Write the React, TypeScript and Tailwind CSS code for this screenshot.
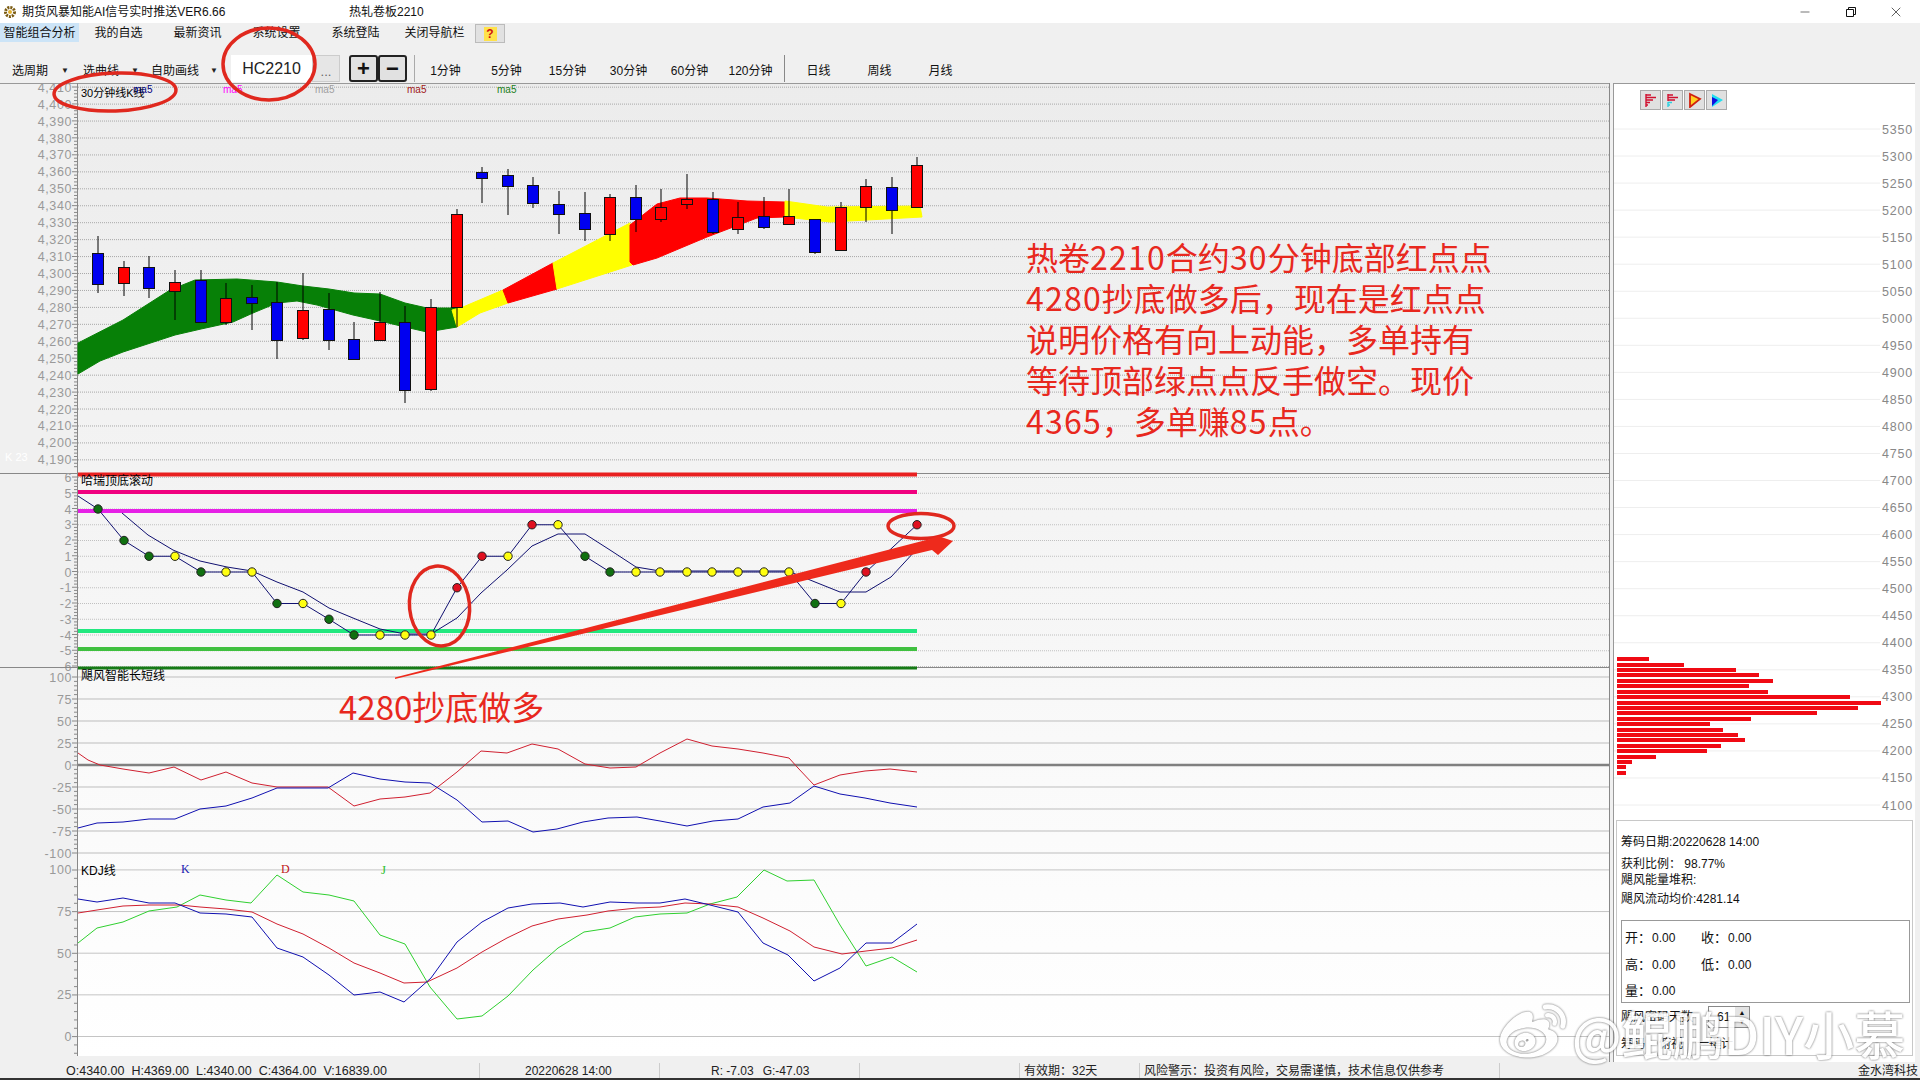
import { FaWeibo } from "react-icons/fa";
import { Minus, X } from "lucide-react";

type Pt = [number, number];

// x, wick top, wick bottom, body top, body bottom, up?
const candles: [number, number, number, number, number, boolean][] = [
  [98, 236, 293, 253, 284, false],
  [124, 261, 296, 267, 283, true],
  [149, 256, 298, 267, 288, false],
  [175, 270, 320, 282, 291, true],
  [201, 270, 323, 280, 322, false],
  [226, 283, 325, 298, 322, true],
  [252, 285, 330, 297, 303, false],
  [277, 282, 359, 302, 340, false],
  [303, 273, 340, 310, 338, true],
  [329, 293, 350, 309, 340, false],
  [354, 322, 359, 339, 359, false],
  [380, 292, 340, 322, 340, true],
  [405, 306, 403, 322, 390, false],
  [431, 299, 391, 307, 389, true],
  [457, 209, 327, 214, 307, true],
  [482, 167, 203, 172, 178, false],
  [508, 169, 215, 175, 186, false],
  [533, 177, 208, 185, 203, false],
  [559, 191, 234, 204, 214, false],
  [585, 192, 241, 213, 229, false],
  [610, 194, 241, 197, 234, true],
  [636, 185, 232, 197, 219, false],
  [661, 189, 222, 207, 219, true],
  [687, 174, 209, 199, 204, true],
  [713, 192, 234, 199, 232, false],
  [738, 202, 234, 217, 229, true],
  [764, 197, 229, 216, 227, false],
  [789, 189, 217, 216, 224, true],
  [815, 219, 254, 219, 252, false],
  [841, 202, 251, 207, 250, true],
  [866, 179, 222, 186, 207, true],
  [892, 177, 234, 187, 210, false],
  [917, 157, 207, 165, 207, true],
];

const ribbons: { color: string; pts: Pt[] }[] = [
  {
    color: "#078007",
    pts: [
      [78, 343], [123, 320], [170, 290], [195, 280], [237, 279], [277, 282], [303, 286], [329, 289],
      [354, 293], [380, 294], [405, 303], [427, 308], [457, 308], [457, 327], [427, 332], [405, 327],
      [380, 321], [353, 315], [317, 305], [297, 301], [277, 303], [253, 313], [233, 322], [201, 329],
      [175, 335], [123, 352], [100, 361], [78, 374],
    ],
  },
  { color: "#ffff00", pts: [[452, 310], [463, 307], [503, 290], [508, 303], [480, 313], [457, 327]] },
  { color: "#ff0000", pts: [[503, 290], [553, 263], [557, 289], [508, 303]] },
  { color: "#ffff00", pts: [[553, 263], [630, 223], [632, 265], [557, 289]] },
  {
    color: "#ff0000",
    pts: [
      [630, 225], [657, 204], [680, 198], [707, 198], [747, 201], [785, 202], [785, 217], [757, 218],
      [707, 237], [657, 258], [633, 265], [630, 262],
    ],
  },
  { color: "#ffff00", pts: [[785, 201], [827, 207], [920, 206], [922, 217], [830, 222], [785, 217]] },
];

const dotColor = { g: "#107010", y: "#ffff10", r: "#e01020" };
const dots: [number, number, keyof typeof dotColor][] = [
  [98, 4, "g"], [124, 2, "g"], [149, 1, "g"], [175, 1, "y"], [201, 0, "g"], [226, 0, "y"], [252, 0, "y"],
  [277, -2, "g"], [303, -2, "y"], [329, -3, "g"], [354, -4, "g"], [380, -4, "y"], [405, -4, "y"], [431, -4, "y"],
  [457, -1, "r"], [482, 1, "r"], [508, 1, "y"], [532, 3, "r"], [558, 3, "y"], [585, 1, "g"], [610, 0, "g"],
  [636, 0, "y"], [660, 0, "y"], [687, 0, "y"], [712, 0, "y"], [738, 0, "y"], [764, 0, "y"], [789, 0, "y"],
  [815, -2, "g"], [841, -2, "y"], [866, 0, "r"], [917, 3, "r"],
];

const hrySlow: Pt[] = [
  [122, 513], [148, 535], [173, 550], [200, 561], [227, 567], [252, 571], [277, 582], [303, 592], [329, 608],
  [353, 618], [380, 629], [405, 634], [431, 634], [457, 618], [481, 593], [507, 570], [532, 546], [558, 534],
  [585, 534], [610, 550], [636, 567], [660, 571], [788, 571], [815, 582], [840, 592], [866, 592], [891, 577],
  [916, 550],
];

const longShortRed: Pt[] = [
  [78, 753], [88, 760], [100, 765], [123, 769], [149, 773], [174, 767], [201, 780], [226, 772], [252, 783],
  [277, 787], [328, 787], [354, 806], [380, 799], [405, 797], [430, 793], [457, 772], [481, 751], [507, 753],
  [532, 744], [558, 749], [585, 764], [610, 768], [636, 767], [660, 753], [687, 739], [712, 746], [738, 749],
  [763, 753], [789, 758], [798, 768], [814, 785], [840, 775], [865, 771], [890, 769], [917, 772],
];
const longShortBlue: Pt[] = [
  [78, 828], [97, 823], [123, 822], [149, 819], [175, 819], [200, 809], [226, 806], [252, 798], [277, 788],
  [328, 788], [353, 773], [380, 779], [405, 782], [430, 783], [457, 800], [482, 822], [508, 821], [533, 832],
  [557, 829], [583, 822], [608, 818], [637, 817], [660, 821], [687, 826], [713, 821], [738, 819], [763, 807],
  [790, 803], [814, 786], [840, 794], [865, 798], [890, 803], [917, 807],
];

const kLine: Pt[] = [
  [78, 899], [97, 902], [123, 898], [149, 903], [175, 903], [200, 913], [226, 914], [252, 917], [277, 948],
  [303, 957], [329, 975], [354, 995], [380, 992], [404, 1002], [431, 978], [457, 942], [482, 922], [508, 908],
  [532, 904], [560, 903], [583, 907], [610, 902], [637, 903], [660, 903], [685, 899], [710, 905], [738, 912],
  [763, 943], [788, 955], [814, 981], [840, 968], [866, 943], [892, 943], [917, 924],
];
const dLine: Pt[] = [
  [78, 913], [97, 910], [123, 906], [149, 905], [180, 905], [200, 907], [226, 909], [252, 912], [277, 924],
  [303, 934], [329, 948], [354, 963], [380, 973], [404, 983], [427, 982], [457, 968], [482, 952], [507, 938],
  [532, 926], [558, 919], [587, 915], [608, 911], [637, 908], [660, 907], [685, 903], [710, 904], [738, 907],
  [763, 918], [790, 931], [814, 947], [842, 954], [866, 951], [892, 948], [917, 940],
];
const jLine: Pt[] = [
  [78, 943], [97, 928], [123, 922], [149, 911], [177, 907], [200, 895], [226, 900], [251, 903], [277, 875],
  [303, 892], [329, 895], [354, 901], [380, 935], [405, 944], [430, 987], [457, 1019], [482, 1016], [508, 996],
  [533, 970], [558, 948], [584, 932], [610, 928], [635, 917], [660, 914], [687, 913], [710, 904], [737, 897],
  [764, 870], [787, 881], [814, 880], [840, 925], [866, 966], [892, 957], [917, 972],
];

const profile: [number, number][] = [
  [657, 32], [663, 67], [668, 119], [673, 142], [679, 156], [684, 132], [690, 151], [695, 233], [701, 264],
  [706, 241], [711, 200], [717, 134], [722, 93], [728, 106], [733, 121], [738, 128], [744, 104], [749, 90],
  [755, 39], [760, 15], [765, 9], [771, 9],
];

const toPoints = (pts: Pt[]) => pts.map((p) => p.join(",")).join(" ");

const priceLabels = Array.from({ length: 23 }, (_, i) => 4410 - i * 10);
const priceY = (v: number) => 138 + (4380 - v) * 1.694;
const hryY = (v: number) => 572 - 15.75 * v;
const longShortY = (v: number) => 765 - 0.88 * v;
const kdjY = (v: number) => 1036.5 - 1.666 * v;

function AxisLabel({ y, children }: { y: number; children: React.ReactNode }) {
  return (
    <text x={72} y={y + 4.5} textAnchor="end" fontSize={12.5} fill="#999" letterSpacing={0.6}>
      {children}
    </text>
  );
}

function Ticks({ from, to, step }: { from: number; to: number; step: number }) {
  const marks = [];
  for (let y = from, i = 0; y <= to; y += step, i++) {
    marks.push(<line key={i} x1={i % 5 === 0 ? 72 : 74} x2={78} y1={y} y2={y} stroke="#888" />);
  }
  return <>{marks}</>;
}

function Chart() {
  return (
    <svg className="block h-[979px] w-[1609px] shrink-0" viewBox="0 83 1609 979">
      <defs>
        <linearGradient id="chartBg" x1="0" y1="0" x2="0" y2="1">
          <stop offset="0" stopColor="#ececec" />
          <stop offset="0.4" stopColor="#f3f3f3" />
          <stop offset="0.72" stopColor="#fafafa" />
          <stop offset="1" stopColor="#ffffff" />
        </linearGradient>
      </defs>
      <rect x={0} y={83} width={1609} height={979} fill="#f0f0f0" />
      <rect x={78} y={84} width={1531} height={972} fill="url(#chartBg)" />
      <line x1={0} x2={1609} y1={83.5} y2={83.5} stroke="#999" />
      <line x1={77.5} x2={77.5} y1={83} y2={1056} stroke="#888" />

      {/* price panel */}
      {priceLabels.map((v) => (
        <g key={v}>
          <line x1={78} x2={1609} y1={priceY(v)} y2={priceY(v)} stroke="#a8a8a8" strokeDasharray="1 1" />
          <AxisLabel y={priceY(v)}>{v.toLocaleString("en-US")}</AxisLabel>
        </g>
      ))}
      <Ticks from={87} to={470} step={3.39} />
      <text x={5} y={461} fontSize={11} fill="#ffffff">K 23</text>
      <text x={81} y={97} fontSize={11} fill="#000">30分钟线K线</text>
      {[
        [133, "#000080"],
        [223, "#ff00ff"],
        [315, "#a0a0a0"],
        [407, "#a01818"],
        [497, "#208020"],
      ].map(([x, c]) => (
        <text key={x} x={x} y={93} fontSize={10} fill={c as string}>ma5</text>
      ))}
      {ribbons.map((r, i) => (
        <polygon key={i} points={toPoints(r.pts)} fill={r.color} stroke={r.color} strokeLinejoin="round" />
      ))}
      {candles.map(([x, wt, wb, bt, bb, up]) => (
        <g key={x}>
          <line x1={x} x2={x} y1={wt} y2={wb} stroke="#000" />
          <rect x={x - 5.5} y={bt + 0.5} width={11} height={bb - bt} fill={up ? "#ff0000" : "#0000f0"} stroke="#111" />
        </g>
      ))}

      {/* top/bottom scroll panel */}
      <line x1={0} x2={1609} y1={473.5} y2={473.5} stroke="#888" />
      {[6, 5, 4, 3, 2, 1, 0, -1, -2, -3, -4, -5, -6].map((v) => (
        <g key={v}>
          <line x1={78} x2={1609} y1={hryY(v)} y2={hryY(v)} stroke="#c0c0c0" strokeDasharray="1 1" />
          <AxisLabel y={hryY(v)}>{v}</AxisLabel>
        </g>
      ))}
      <Ticks from={477} to={666} step={3.15} />
      <rect x={78} y={472.5} width={839} height={4} fill="#e82020" />
      <rect x={78} y={490} width={839} height={4} fill="#f0007f" />
      <rect x={78} y={509} width={839} height={4} fill="#e620e6" />
      <rect x={78} y={629} width={839} height={4} fill="#22e87f" />
      <rect x={78} y={647} width={839} height={4} fill="#40c040" />
      <line x1={0} x2={1609} y1={667.5} y2={667.5} stroke="#888" />
      <rect x={78} y={666.5} width={839} height={3} fill="#157a15" />
      <text x={81} y={485} fontSize={12} fill="#000">哈瑞顶底滚动</text>
      <polyline points={toPoints(hrySlow)} fill="none" stroke="#101070" />
      <polyline
        points={toPoints([[78, 496], ...dots.map(([x, v]): Pt => [x, hryY(v)])])}
        fill="none"
        stroke="#101070"
      />
      {dots.map(([x, v, c]) => (
        <circle key={x} cx={x} cy={hryY(v)} r={4.2} fill={dotColor[c]} stroke="#222" />
      ))}

      {/* long/short panel */}
      {[100, 75, 50, 25, 0, -25, -50, -75, -100].map((v) => (
        <g key={v}>
          <line
            x1={78}
            x2={1609}
            y1={longShortY(v)}
            y2={longShortY(v)}
            stroke={v === 0 ? "#808080" : "#bdbdbd"}
            strokeWidth={v === 0 ? 2.5 : 1}
          />
          <AxisLabel y={longShortY(v)}>{v}</AxisLabel>
        </g>
      ))}
      <Ticks from={677} to={853} step={4.4} />
      <text x={81} y={680} fontSize={12} fill="#000">飓风智能长短线</text>
      <polyline points={toPoints(longShortRed)} fill="none" stroke="#d02030" />
      <polyline points={toPoints(longShortBlue)} fill="none" stroke="#1010b0" />

      {/* kdj panel */}
      {[100, 75, 50, 25, 0].map((v) => (
        <g key={v}>
          <line x1={78} x2={1609} y1={kdjY(v)} y2={kdjY(v)} stroke="#c4c4c4" />
          <AxisLabel y={kdjY(v)}>{v}</AxisLabel>
        </g>
      ))}
      <Ticks from={870} to={1056} step={8.33} />
      <text x={81} y={875} fontSize={12} fill="#000">KDJ线</text>
      <text x={181} y={873} fontSize={12} fill="#2020b0" fontFamily="'Liberation Serif', serif">K</text>
      <text x={281} y={873} fontSize={12} fill="#c01818" fontFamily="'Liberation Serif', serif">D</text>
      <text x={381} y={874} fontSize={13} fill="#30c030" fontFamily="'Liberation Serif', serif">J</text>
      <polyline points={toPoints(jLine)} fill="none" stroke="#30d030" />
      <polyline points={toPoints(dLine)} fill="none" stroke="#d02030" />
      <polyline points={toPoints(kLine)} fill="none" stroke="#1010b0" />
    </svg>
  );
}

function PanelIcon({ children }: { children: React.ReactNode }) {
  return (
    <button className="flex h-[20px] w-[21px] items-center justify-center border border-[#aaa] bg-[#e0e0e0]">
      <svg width="15" height="16" viewBox="0 0 15 16">
        {children}
      </svg>
    </button>
  );
}

function ScaleChart() {
  const labels = Array.from({ length: 26 }, (_, i) => 5350 - i * 50);
  return (
    <svg className="block h-[710px] w-[301px]" viewBox="1614 110 301 710">
      {labels.map((v, i) => {
        const y = 129 + i * 27.04;
        return (
          <g key={v}>
            <line x1={1614} x2={1880} y1={y} y2={y} stroke="#eeeeee" />
            <text x={1913} y={y + 4.5} textAnchor="end" fontSize={12.5} fill="#888" letterSpacing={0.8}>
              {v}
            </text>
          </g>
        );
      })}
      {profile.map(([y, w]) => (
        <rect key={y} x={1617} y={y} width={w} height={4} fill="#f00a14" />
      ))}
    </svg>
  );
}

function PriceCell({ label, value }: { label: string; value: string }) {
  return (
    <div className="flex w-[75px] items-center">
      <span className="w-[27px] text-[13px]">{label}</span>
      <span>{value}</span>
    </div>
  );
}

function SidePanel() {
  return (
    <aside className="flex w-[311px] shrink-0 border-l border-[#888] bg-[#f0f0f0]">
      <div className="ml-[3px] flex w-[302px] flex-col border-l border-t border-[#999] bg-white">
        <div className="flex h-[26px] gap-px pl-[26px] pt-[6px]">
          <PanelIcon>
            <path d="M3 2v13M3 3h5M3 5.5h10M3 8h7M3 10.5h4M3 13h2" stroke="#d01030" strokeWidth="1.4" fill="none" />
          </PanelIcon>
          <PanelIcon>
            <path d="M3 2v7M3 3h5M3 5.5h10M3 8h7" stroke="#d01030" strokeWidth="1.4" fill="none" />
            <path d="M3 10v5M3 10.5h4M3 13h2" stroke="#30d0e0" strokeWidth="1.4" fill="none" />
          </PanelIcon>
          <PanelIcon>
            <path d="M3 2l10 5-10 8z" fill="#ffd020" stroke="#d02010" strokeWidth="1.8" />
          </PanelIcon>
          <PanelIcon>
            <path d="M3 2l11 6-11 7z" fill="#20e0f0" />
            <path d="M3 5l6 3-6 6z" fill="#1010e0" />
          </PanelIcon>
        </div>
        <ScaleChart />
        <div className="mx-[2px] flex h-[236px] flex-col border border-[#c8c8c8] px-[4px] pt-[13px] text-[12px] leading-[16px] text-[#111]">
          <div>筹码日期:20220628 14:00</div>
          <div className="mt-[6px]">获利比例： 98.77%</div>
          <div>飓风能量堆积:</div>
          <div className="mt-[3px]">飓风流动均价:4281.14</div>
          <div className="mt-[13px] flex h-[83px] w-[289px] flex-col justify-between border border-[#999] px-[3px] pb-[3px] pt-[9px]">
            <div className="flex gap-[1px]">
              <PriceCell label="开：" value="0.00" />
              <PriceCell label="收：" value="0.00" />
            </div>
            <div className="flex gap-[1px]">
              <PriceCell label="高：" value="0.00" />
              <PriceCell label="低：" value="0.00" />
            </div>
            <PriceCell label="量：" value="0.00" />
          </div>
          <div className="mt-[3px] flex items-center">
            <span className="w-[87px]">飓风密码天数</span>
            <span className="flex h-[22px] w-[42px] items-center justify-between border border-[#888] bg-white pl-[8px]">
              61
              <span className="flex h-full w-[14px] flex-col items-center justify-center bg-[#e4e4e4] text-[7px] leading-[9px]">
                <span>▲</span>
                <span>▼</span>
              </span>
            </span>
          </div>
          <div className="mt-[8px] flex gap-[14px]">
            <span>筹码</span>
            <span>俯视</span>
            <span>一键计</span>
          </div>
        </div>
      </div>
      <div className="flex-1" />
    </aside>
  );
}

function Dropdown({ label, className }: { label: string; className: string }) {
  return (
    <button className={`flex h-[27px] items-center justify-between pl-[12px] pt-[4px] ${className}`}>
      <span>{label}</span>
      <span className="text-[8px] text-[#222]">▼</span>
    </button>
  );
}

const periods = ["1分钟", "5分钟", "15分钟", "30分钟", "60分钟", "120分钟"];
const longPeriods = ["日线", "周线", "月线"];
const menus = ["我的自选", "最新资讯", "系统设置", "系统登陆", "关闭导航栏"];

function Toolbar() {
  return (
    <div className="flex h-[38px] shrink-0 bg-[#f0f0f0] pt-[10px] text-[12px] text-[#111]">
      <Dropdown label="选周期" className="w-[71px] pr-[2px]" />
      <Dropdown label="选曲线" className="w-[68px] pr-0" />
      <Dropdown label="自助画线" className="w-[84px] pr-[5px]" />
      <div className="ml-[8px] flex h-[27px] w-[81px] items-center justify-center bg-white text-[16px] text-[#222]">
        HC2210
      </div>
      <div className="flex h-[27px] w-[28px] items-end justify-center border border-[#ccc] bg-[#e6e6e6] pb-[3px] text-[13px] leading-none text-[#666]">
        ...
      </div>
      <div className="ml-[9px] flex h-[27px] w-[29px] items-center justify-center rounded-[3px] border-2 border-[#222] bg-[#e1e1e1] text-[22px] font-bold leading-none">
        +
      </div>
      <div className="flex h-[27px] w-[29px] items-center justify-center rounded-[3px] border-2 border-[#222] bg-[#e1e1e1] text-[22px] font-bold leading-none">
        −
      </div>
      <div className="ml-[7px] h-[27px] w-px bg-[#aaa]" />
      <div className="flex">
        {periods.map((p) => (
          <button key={p} className="h-[27px] w-[61px] pt-[4px] text-center">
            {p}
          </button>
        ))}
      </div>
      <div className="ml-[3px] h-[27px] w-px bg-[#888]" />
      <div className="ml-[3px] flex">
        {longPeriods.map((p) => (
          <button key={p} className="h-[27px] w-[61px] pt-[4px] text-center">
            {p}
          </button>
        ))}
      </div>
    </div>
  );
}

function TitleBar() {
  return (
    <div className="flex h-[23px] shrink-0 items-center bg-white text-[12px] text-[#111]">
      <svg className="ml-[3px] mr-[5px]" width="14" height="16" viewBox="0 0 14 16">
        <circle cx="7" cy="8" r="4.5" fill="none" stroke="#7a5a10" strokeWidth="3" strokeDasharray="2 1" />
        <circle cx="7" cy="8" r="2" fill="#e0b030" />
      </svg>
      <span className="w-[327px]">期货风暴知能AI信号实时推送VER6.66</span>
      <span>热轧卷板2210</span>
      <div className="ml-auto flex items-center text-[#111]">
        <button className="flex w-[46px] justify-center">
          <Minus size={14} strokeWidth={1} />
        </button>
        <button className="flex w-[46px] justify-center">
          <svg width="12" height="12" viewBox="0 0 12 12" fill="none" stroke="#111">
            <path d="M1.5 3.5h7v7h-7zM3.5 3.5v-2h7v7h-2" />
          </svg>
        </button>
        <button className="flex w-[46px] justify-center pr-[2px]">
          <X size={16} strokeWidth={1} />
        </button>
      </div>
    </div>
  );
}

function MenuBar() {
  return (
    <div className="flex h-[22px] shrink-0 bg-[#f0f0f0] text-[12px] text-[#111]">
      <button className="h-[19px] w-[79px] bg-[#cce4f7] pt-[2px] text-center leading-[17px]">智能组合分析</button>
      {menus.map((m) => (
        <button key={m} className="h-[19px] w-[79px] pt-[2px] text-center leading-[17px]">
          {m}
        </button>
      ))}
      <button className="ml-[1px] mt-px flex h-[19px] w-[30px] items-center justify-center border border-[#bbb] bg-[#e1e1e1]">
        <span className="flex h-[14px] w-[13px] items-center justify-center bg-[#ffe24a] text-[12px] font-bold leading-none text-[#d01010]">
          ?
        </span>
      </button>
    </div>
  );
}

function StatusBar() {
  return (
    <div className="flex h-[16px] shrink-0 items-start bg-[#f0f0f0] pt-px text-[12px] leading-[17px] text-[#222]">
      <div className="flex h-full w-[480px] gap-[7px] border-r border-[#ccc] pl-[66px] text-[12.5px]">
        <span>O:4340.00</span>
        <span>H:4369.00</span>
        <span>L:4340.00</span>
        <span>C:4364.00</span>
        <span>V:16839.00</span>
      </div>
      <div className="h-full w-[180px] border-r border-[#ccc] pl-[45px]">20220628 14:00</div>
      <div className="flex h-full w-[200px] gap-[9px] border-r border-[#ccc] pl-[51px]">
        <span>R: -7.03</span>
        <span>G:-47.03</span>
      </div>
      <div className="h-full w-[159px]" />
      <div className="h-full w-[121px] border-x border-[#ccc] pl-[4px]">有效期：32天</div>
      <div className="h-full w-[360px] border-r border-[#ccc] pl-[4px]">风险警示：投资有风险，交易需谨慎，技术信息仅供参考</div>
      <div className="ml-auto pr-[2px]">金水湾科技</div>
    </div>
  );
}

function Num({ children }: { children: React.ReactNode }) {
  return <span className="tracking-[1.2px]">{children}</span>;
}

function Annotations() {
  return (
    <div className="pointer-events-none absolute inset-0 font-['Noto_Sans_CJK_SC','Liberation_Sans',sans-serif] text-[#e8281e]">
      <svg className="absolute inset-0 h-[1080px] w-[1920px]" viewBox="0 0 1920 1080" fill="none" stroke="#e0281e" strokeWidth="3.5">
        <ellipse cx="115" cy="92" rx="61" ry="19" transform="rotate(-2 115 92)" />
        <ellipse cx="269" cy="64" rx="46" ry="36" />
        <ellipse cx="439.5" cy="606" rx="30" ry="40" transform="rotate(-6 439.5 606)" />
        <ellipse cx="921" cy="526" rx="33" ry="12.5" />
        <polygon
          points="395,677.5 930,539 938,536 953,541 938,555 932,550 395,679"
          fill="#ee2a1c"
          stroke="none"
        />
      </svg>
      <p className="absolute left-[1026px] top-[236px] w-[490px] text-[32px] leading-[41px]">
        热卷<Num>2210</Num>合约<Num>30</Num>分钟底部红点点
        <br />
        <Num>4280</Num>抄底做多后，现在是红点点
        <br />
        说明价格有向上动能，多单持有
        <br />
        等待顶部绿点点反手做空。现价
        <br />
        <Num>4365</Num>，多单赚<Num>85</Num>点。
      </p>
      <p className="absolute left-[339px] top-[685px] text-[33px] leading-[42px]">4280抄底做多</p>
      <div className="absolute left-[1500px] top-[1000px] flex items-center text-white opacity-90 [filter:drop-shadow(0_0_1px_#555)]">
        <FaWeibo size={66} />
        <span className="ml-[6px] text-[51px] font-medium leading-[60px]">@鲲鹏DIY小慕</span>
      </div>
    </div>
  );
}

export default function App() {
  return (
    <div className="relative flex h-[1080px] w-[1920px] flex-col overflow-hidden bg-[#f0f0f0] font-['Liberation_Sans','Noto_Sans_CJK_SC',sans-serif]">
      <TitleBar />
      <MenuBar />
      <Toolbar />
      <main className="flex h-[979px] shrink-0">
        <Chart />
        <SidePanel />
      </main>
      <StatusBar />
      <div className="h-[2px] shrink-0 bg-[#333]" />
      <Annotations />
    </div>
  );
}
